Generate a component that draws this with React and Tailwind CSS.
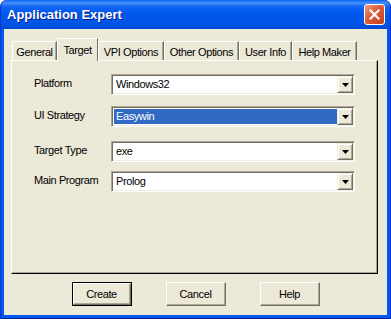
import React from "react";

const tabs = [
  { name: "General", w: "w-[45px]" },
  { name: "Target", w: "w-[41px]", active: true },
  { name: "VPI Options", w: "w-[66px]" },
  { name: "Other Options", w: "w-[75px]" },
  { name: "User Info", w: "w-[53px]" },
  { name: "Help Maker", w: "w-[65px]" },
];

const rows = [
  { label: "Platform", value: "Windows32", mt: "mt-[13px]" },
  { label: "UI Strategy", value: "Easywin", mt: "mt-[11px]", selected: true },
  { label: "Target Type", value: "exe", mt: "mt-[14px]" },
  { label: "Main Program", value: "Prolog", mt: "mt-[9px]" },
];

function Combo({ value, selected }) {
  return (
    <div className="w-[244px] h-[21px] flex border-t border-l border-[#ACA899] border-r-white border-b-white border-r border-b shadow-[inset_1px_1px_0_#716F64,inset_-1px_-1px_0_#F1EFE2] bg-white p-[2px] pl-[2px]">
      <div
        className={
          "flex-1 flex items-center pl-[2px] text-[11px] tracking-[-0.4px] " +
          (selected ? "bg-[#316AC5] text-white" : "text-black")
        }
      >
        {value}
      </div>
      <div className="w-[16px] h-[17px] -mt-[1px] -mr-[1px] bg-[#ECE9D8] border-t border-l border-[#F1EFE2] border-r border-b border-r-[#716F64] border-b-[#716F64] shadow-[inset_1px_1px_0_#fff,inset_-1px_-1px_0_#ACA899] flex items-center justify-center">
        <svg width="7" height="4" viewBox="0 0 7 4">
          <path d="M0 0h7L3.5 4z" fill="#000" />
        </svg>
      </div>
    </div>
  );
}

function Button({ children, isDefault }) {
  return (
    <div
      className={
        "w-[60px] h-[24px] " + (isDefault ? "border border-black" : "")
      }
    >
      <div className="w-full h-full flex items-center justify-center bg-[#ECE9D8] border-t border-l border-white border-r border-b border-r-[#716F64] border-b-[#716F64] shadow-[inset_-1px_-1px_0_#ACA899] text-[11px] tracking-[-0.4px] text-black">
        {children}
      </div>
    </div>
  );
}

export default function App() {
  return (
    <div
      className="w-[391px] h-[319px] bg-white flex flex-col select-none"
      style={{ fontFamily: '"Liberation Sans", Arial, sans-serif' }}
    >
      {/* title bar */}
      <div className="h-[29px] rounded-t-[7px] bg-[linear-gradient(to_bottom,#0A5FF0_0%,#4592FA_10%,#1466F2_22%,#0058EE_45%,#0055E5_80%,#0049D6_100%)] flex items-center pl-[7px] pr-[6px] shadow-[inset_1px_0_0_#0831D9,inset_-1px_0_0_#0831D9]">
        <span className="text-white font-bold text-[13px] [text-shadow:1px_1px_0_#0A1E8C] mt-[1px]">
          Application Expert
        </span>
        <div className="ml-auto w-[21px] h-[21px] rounded-[3px] border border-white bg-[linear-gradient(135deg,#EE9A7E_0%,#DE5B35_45%,#C6401A_100%)] flex items-center justify-center">
          <svg width="11" height="11" viewBox="0 0 11 11">
            <path d="M1.5 1.5l8 8M9.5 1.5l-8 8" stroke="#fff" strokeWidth="2.2" strokeLinecap="square" />
          </svg>
        </div>
      </div>

      {/* frame + client */}
      <div className="flex-1 flex flex-col bg-[#0058EE] px-[4px] pb-[4px] shadow-[inset_1px_0_0_#0831D9,inset_-1px_0_0_#0831D9,inset_0_-1px_0_#001EA0]">
        <div className="flex-1 flex flex-col bg-[#ECE9D8] pt-[9px] pl-[7px]">
          {/* tab row */}
          <div className="flex items-end h-[22px] pl-[1px] relative z-10">
            {tabs.map((t) =>
              t.active ? (
                <div
                  key={t.name}
                  className={
                    t.w +
                    " h-[23px] -mb-[1px] bg-[#ECE9D8] border-t border-l border-white border-r border-r-[#716F64] rounded-tl-[2px] flex items-start justify-center pt-[3px] text-[11px] tracking-[-0.4px] text-black"
                  }
                >
                  {t.name}
                </div>
              ) : (
                <div
                  key={t.name}
                  className={
                    t.w +
                    " h-[19px] border-t border-l border-white border-r border-r-[#716F64] rounded-tl-[2px] flex items-start justify-center pt-[2px] text-[11px] tracking-[-0.4px] text-black shadow-[inset_-1px_0_0_#ACA899]"
                  }
                >
                  {t.name}
                </div>
              )
            )}
          </div>

          {/* panel */}
          <div className="w-[367px] h-[214px] border-t border-l border-white border-r border-b border-r-black border-b-black shadow-[inset_-1px_-1px_0_#ACA899] flex flex-col pl-[22px]">
            {rows.map((r) => (
              <div key={r.label} className={"flex items-center " + r.mt}>
                <div className="w-[77px] text-[11px] tracking-[-0.4px] text-black -mt-[2px]">
                  {r.label}
                </div>
                <Combo value={r.value} selected={r.selected} />
              </div>
            ))}
          </div>

          {/* buttons */}
          <div className="flex justify-center gap-[34px] mt-[8px] pr-[7px]">
            <Button isDefault>Create</Button>
            <Button>Cancel</Button>
            <Button>Help</Button>
          </div>
        </div>
      </div>
    </div>
  );
}
